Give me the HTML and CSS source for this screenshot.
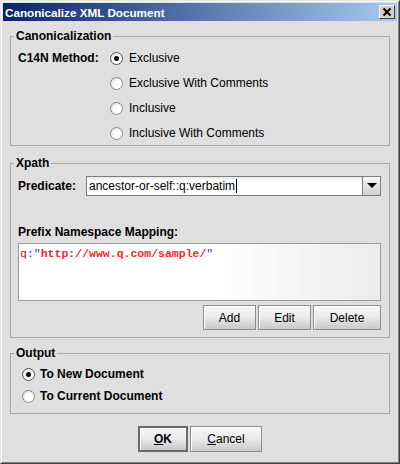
FILE: index.html
```html
<!DOCTYPE html>
<html>
<head>
<meta charset="utf-8">
<link rel="stylesheet" href="styles.css">
</head>
<body>
<div class="window">
  <div class="frame">
    <div class="titlebar">
      <span class="title">Canonicalize XML Document</span>
      <span class="close"><svg width="14" height="12" viewBox="0 0 14 12"><path d="M3.5 2.5 L10.5 9.5 M10.5 2.5 L3.5 9.5" stroke="#000" stroke-width="2" fill="none"/></svg></span>
    </div>
    <div class="content">
      <fieldset class="group">
        <legend>Canonicalization</legend>
        <div class="canon-body">
          <span class="method-label">C14N Method:</span>
          <div class="options">
            <div class="opt"><span class="radio on"></span><span>Exclusive</span></div>
            <div class="opt"><span class="radio"></span><span>Exclusive With Comments</span></div>
            <div class="opt"><span class="radio"></span><span>Inclusive</span></div>
            <div class="opt"><span class="radio"></span><span>Inclusive With Comments</span></div>
          </div>
        </div>
      </fieldset>
      <fieldset class="group g-xpath">
        <legend>Xpath</legend>
        <div class="xpath-body">
          <div class="pred-row">
            <span class="pred-label">Predicate:</span>
            <div class="combo">
              <div class="combo-field"><span>ancestor-or-self::q:verbatim</span><span class="caret"></span></div>
              <div class="combo-btn"><svg width="10" height="6" viewBox="0 0 10 6"><path d="M0 0 H10 L5 5 Z" fill="#000"/></svg></div>
            </div>
          </div>
          <div class="map-label">Prefix Namespace Mapping:</div>
          <div class="mapping"><span class="m-prefix">q</span><span class="m-sep">:"</span><span class="m-uri">http://www.q.com/sample/</span><span class="m-sep">"</span></div>
          <div class="btn-row">
            <button class="btn w-add">Add</button>
            <button class="btn w-add">Edit</button>
            <button class="btn w-del">Delete</button>
          </div>
        </div>
      </fieldset>
      <fieldset class="group g-output">
        <legend>Output</legend>
        <div class="out-body">
          <div class="out-opt"><span class="radio on"></span><span>To New Document</span></div>
          <div class="out-opt"><span class="radio"></span><span>To Current Document</span></div>
        </div>
      </fieldset>
      <div class="footer">
        <button class="btn btn-ok"><u>O</u>K</button>
        <button class="btn btn-cancel"><u>C</u>ancel</button>
      </div>
    </div>
  </div>
</div>
</body>
</html>
```
FILE: styles.css
```css
html, body {
  margin: 0;
  padding: 0;
}
body {
  font-family: "Liberation Sans", Arial, sans-serif;
  font-size: 12px;
  color: #000;
  background: #dedede;
}
.window {
  width: 400px;
  height: 464px;
  box-sizing: border-box;
  border: 1px solid;
  border-color: #e4e4e4 #404040 #404040 #e4e4e4;
}
.frame {
  height: 100%;
  box-sizing: border-box;
  border: 1px solid;
  border-color: #fff #808080 #808080 #fff;
  padding: 1px;
  display: flex;
  flex-direction: column;
  background: #dfdfdf;
}
.titlebar {
  height: 18px;
  flex: none;
  display: flex;
  align-items: center;
  justify-content: space-between;
  padding: 0 2px;
  background: linear-gradient(to right, #0a246a, #a6caf0);
}
.title {
  color: #fff;
  font-family: "Liberation Sans", Arial, sans-serif;
  font-weight: bold;
  font-size: 11.7px;
  letter-spacing: 0;
}
.close {
  width: 16px;
  height: 14px;
  box-sizing: border-box;
  background: #d4d0c8;
  border: 1px solid;
  border-color: #fff #404040 #404040 #fff;
  display: flex;
  align-items: center;
  justify-content: center;
}
.content {
  flex: 1;
  padding: 8px 7px 0;
  display: flex;
  flex-direction: column;
}
.group {
  margin: 0;
  padding: 0;
  min-width: 0;
  border: 1px solid #a9a9a9;
}
.group legend {
  margin-left: 3px;
  padding: 0 2px;
  font-weight: bold;
  font-size: 12px;
  line-height: 14px;
}
.g-xpath { margin-top: 10px; }
.g-output { margin-top: 8px; }

.canon-body {
  display: flex;
  align-items: flex-start;
  padding: 5px 8px 2px 7px;
}
.method-label {
  width: 92px;
  flex: none;
  font-weight: bold;
  line-height: 20px;
}
.options {
  display: flex;
  flex-direction: column;
  gap: 5px;
}
.opt {
  height: 20px;
  display: flex;
  align-items: center;
  gap: 6px;
}
.radio {
  width: 13px;
  height: 13px;
  box-sizing: border-box;
  border-radius: 50%;
  border: 1px solid #8a8a8a;
  background: radial-gradient(circle at 65% 65%, #ffffff 35%, #d6d6d6 100%);
  flex: none;
  display: flex;
  align-items: center;
  justify-content: center;
}
.radio.on {
  border-color: #555;
}
.radio.on::after {
  content: "";
  width: 5px;
  height: 5px;
  border-radius: 50%;
  background: #000;
}

.xpath-body {
  padding: 6px 8px 7px 7px;
  display: flex;
  flex-direction: column;
}
.pred-row {
  display: flex;
  align-items: center;
  height: 20px;
}
.pred-label {
  width: 68px;
  flex: none;
  font-weight: bold;
}
.combo {
  flex: 1;
  height: 20px;
  display: flex;
}
.combo-field {
  flex: 1;
  box-sizing: border-box;
  border: 1px solid #7c7c7c;
  background: linear-gradient(to bottom, #e8e8e8 0, #fff 4px, #fff 100%);
  display: flex;
  align-items: center;
  padding-left: 2px;
}
.caret {
  width: 1px;
  height: 14px;
  background: #000;
  margin-left: 1px;
}
.combo-btn {
  width: 18px;
  flex: none;
  box-sizing: border-box;
  border: 1px solid #7c7c7c;
  border-left: none;
  background: linear-gradient(to bottom, #fafafa, #cfcfcf);
  display: flex;
  align-items: center;
  justify-content: center;
}
.map-label {
  margin-top: 29px;
  font-weight: bold;
  line-height: 14px;
}
.mapping {
  margin-top: 4px;
  height: 58px;
  box-sizing: border-box;
  border: 1px solid #9a9a9a;
  background: linear-gradient(to right, #ffffff 55%, #ececec 100%);
  padding: 3px 1px 0;
  font-family: "Liberation Mono", "Courier New", monospace;
  font-size: 11.5px;
  line-height: 14px;
}
.m-prefix { color: #8b1a1a; }
.m-sep { color: #1a3cff; }
.m-uri { color: #ff1f1f; font-weight: bold; }
.btn-row {
  margin-top: 4px;
  display: flex;
  justify-content: flex-end;
  gap: 2px;
}
.btn {
  height: 25px;
  box-sizing: border-box;
  margin: 0;
  padding: 0;
  font-family: "Liberation Sans", Arial, sans-serif;
  font-size: 12px;
  color: #000;
  border: 1px solid #8c8c8c;
  box-shadow: inset 1px 1px 0 #fff;
  background: linear-gradient(to bottom, #f6f6f6 0%, #ececec 45%, #c9c9c9 100%);
}
.w-add { width: 53px; }
.w-del { width: 68px; }

.out-body {
  padding: 5px 8px 8px 11px;
  display: flex;
  flex-direction: column;
  gap: 4px;
}
.out-opt {
  height: 18px;
  display: flex;
  align-items: center;
  gap: 5px;
  font-weight: bold;
}
.footer {
  margin-top: 12px;
  display: flex;
  justify-content: center;
  gap: 2px;
}
.btn-ok {
  width: 50px;
  height: 26px;
  font-weight: bold;
  border: 2px solid #6a6a6a;
}
.btn-cancel {
  width: 72px;
  height: 26px;
}
```
